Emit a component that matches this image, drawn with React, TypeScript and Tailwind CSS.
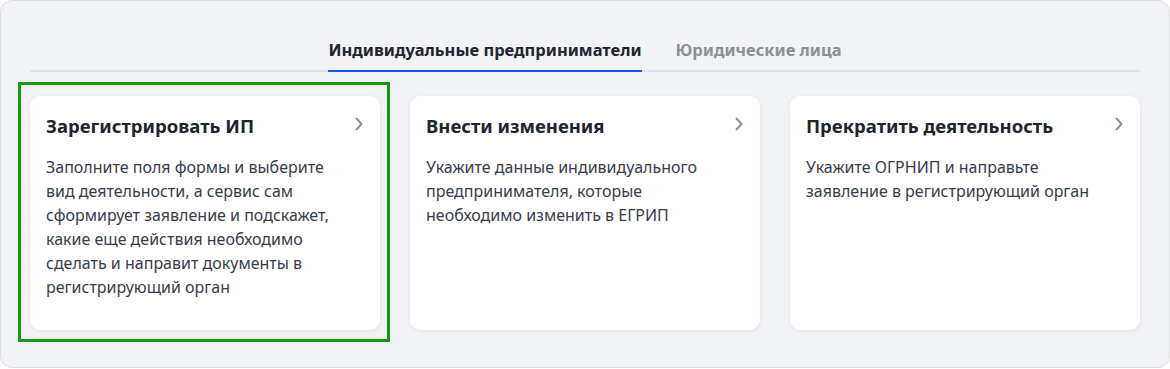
import React from 'react';

const cards = [
  {
    title: 'Зарегистрировать ИП',
    text: 'Заполните поля формы и выберите вид деятельности, а сервис сам сформирует заявление и подскажет, какие еще действия необходимо сделать и направит документы в регистрирующий орган',
    selected: true,
  },
  {
    title: 'Внести изменения',
    text: 'Укажите данные индивидуального предпринимателя, которые необходимо изменить в ЕГРИП',
  },
  {
    title: 'Прекратить деятельность',
    text: 'Укажите ОГРНИП и направьте заявление в регистрирующий орган',
  },
];

function Chevron() {
  return (
    <svg width="10" height="14" viewBox="0 0 10 14" fill="none" className="mt-[5px] shrink-0">
      <path d="M2.5 1.5 L7.5 7 L2.5 12.5" stroke="#8a929e" strokeWidth="2" strokeLinecap="round" strokeLinejoin="round" />
    </svg>
  );
}

export default function App() {
  return (
    <div className="w-[1170px] h-[369px] bg-white" style={{ fontFamily: '"Noto Sans", "Open Sans", sans-serif' }}>
      <div className="w-[1170px] h-[368px] bg-[#f2f3f7] border border-[#dcdee3] rounded-[12px] px-[29px] pt-[37px]">
        <div className="flex justify-center gap-[34px] border-b-2 border-[#dfe1e6]">
          <div className="relative pb-[8px] text-[16.5px] leading-[24px] font-bold text-[#22252f]">
            Индивидуальные предприниматели
            <div className="absolute left-0 right-0 -bottom-[2px] h-[2px] bg-[#0b5cff]" />
          </div>
          <div className="pb-[8px] text-[16.5px] leading-[24px] font-bold text-[#8b9099]">Юридические лица</div>
        </div>
        <div className="grid grid-cols-3 gap-[30px] mt-[24px]">
          {cards.map((c) => (
            <div key={c.title} className="relative bg-white rounded-[10px] shadow-[0_1px_4px_rgba(20,30,60,0.08)] px-[16px] pt-[16px] pb-[31px]">
              {c.selected && (
                <div className="absolute -left-[12px] -right-[10px] -top-[14px] -bottom-[12px] border-[3px] border-[#139a13] pointer-events-none" />
              )}
              <div className="flex justify-between items-start">
                <div className="text-[18.5px] leading-[28px] font-bold text-[#20242f]">{c.title}</div>
                <Chevron />
              </div>
              <p className="mt-[15px] text-[16px] leading-[24px] text-[#383c48] pr-[22px]">{c.text}</p>
            </div>
          ))}
        </div>
      </div>
    </div>
  );
}
